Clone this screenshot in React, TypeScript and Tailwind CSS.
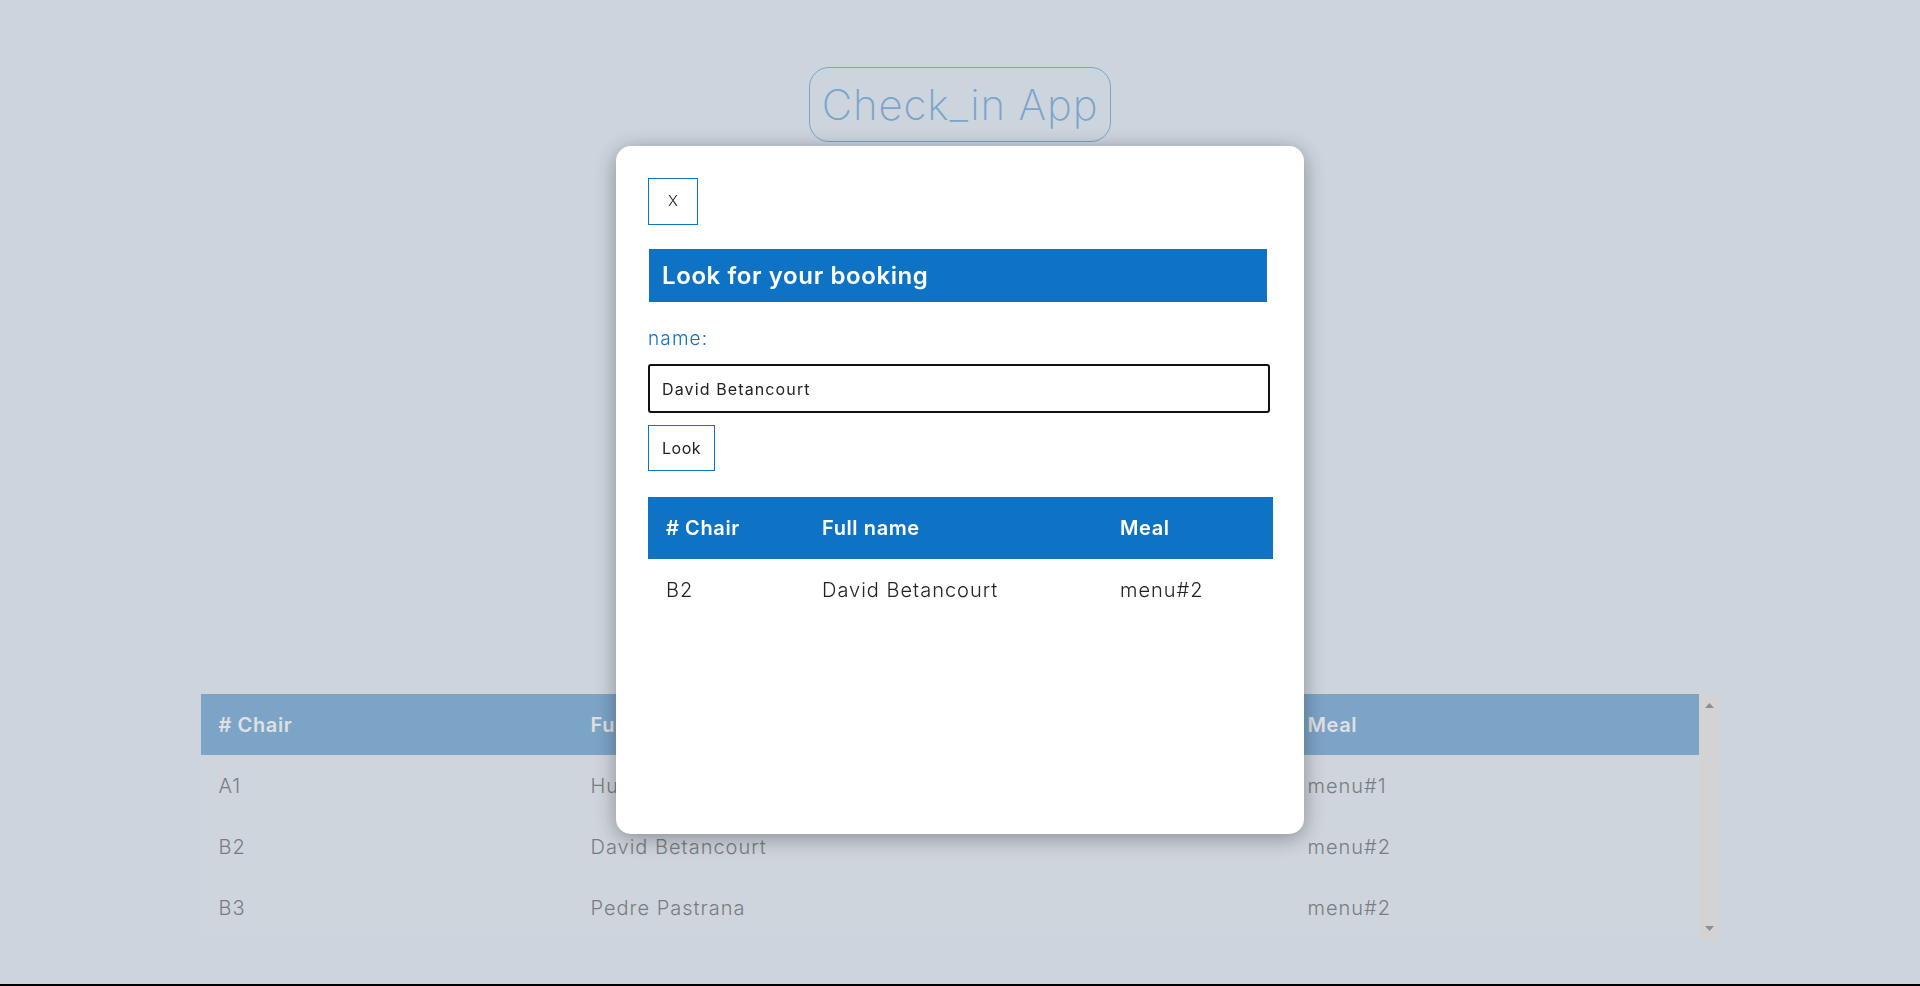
import { useState } from "react";

type Booking = {
  chair: string;
  name: string;
  meal: string;
};

const bookings: Booking[] = [
  { chair: "A1", name: "Hugo Martinez", meal: "menu#1" },
  { chair: "B2", name: "David Betancourt", meal: "menu#2" },
  { chair: "B3", name: "Pedre Pastrana", meal: "menu#2" },
];

const font = { fontFamily: "Inter, 'Noto Sans', sans-serif" };

// fake scrollbar track, content fits so there is no thumb
const ScrollTrack = () => (
  <div className="flex w-[21px] flex-col items-center justify-between bg-[#f1f1f1] py-[9px]">
    <svg width="9" height="5" viewBox="0 0 9 5">
      <polygon points="4.5,0 9,5 0,5" fill="#a3a3a3" />
    </svg>
    <svg width="9" height="5" viewBox="0 0 9 5">
      <polygon points="0,0 9,0 4.5,5" fill="#a3a3a3" />
    </svg>
  </div>
);

const SearchModal = () => {
  const [query, setQuery] = useState("David Betancourt");
  const results = bookings.filter((b) => b.name === query);

  return (
    <div className="fixed inset-0 flex justify-center bg-black/[0.12] pt-[146px]">
      <div className="flex h-[688px] w-[688px] flex-col rounded-[15px] bg-white px-8 pt-8 shadow-[0_4px_22px_rgba(0,0,0,0.35)]">
        <button className="flex h-[47px] w-[50px] items-center justify-center border border-[#0e72c5] text-[15px] font-light text-[#222]">
          X
        </button>

        <h2 className="mt-6 ml-px flex h-[53px] w-[618px] items-center bg-[#0e72c5] pl-[13px] text-[24px] font-semibold tracking-[0.025em] text-white">
          Look for your booking
        </h2>

        <label className="mt-6 text-[19px] leading-[26px] font-light tracking-[0.06em] text-[#0e72c5]">
          name:
        </label>

        <input
          autoFocus
          value={query}
          onChange={(e) => setQuery(e.target.value)}
          className="mt-3 h-[49px] w-[622px] rounded-[3px] border-2 border-[#111] px-3 text-[16px] tracking-[0.07em] text-[#222] caret-black outline-none"
          style={font}
        />

        <button className="mt-3 h-[46px] w-[67px] border border-[#0e72c5] text-[16px] tracking-[0.03em] text-[#222]">
          Look
        </button>

        <table className="mt-[26px] w-[625px] table-fixed border-collapse text-left">
          <thead>
            <tr className="h-[62px] bg-[#0e72c5] text-[20px] font-semibold tracking-[0.03em] text-white">
              <th className="w-[156px] pl-[18px] font-semibold"># Chair</th>
              <th className="w-[298px] pl-[18px] font-semibold">Full name</th>
              <th className="pl-[18px] font-semibold">Meal</th>
            </tr>
          </thead>
          <tbody>
            {results.map((b) => (
              <tr
                key={b.chair}
                className="h-[62px] text-[20px] font-light tracking-[0.05em] text-[#222]"
              >
                <td className="pl-[18px]">{b.chair}</td>
                <td className="pl-[18px]">{b.name}</td>
                <td className="pl-[18px]">{b.meal}</td>
              </tr>
            ))}
          </tbody>
        </table>
      </div>
    </div>
  );
};

export default function App() {
  return (
    <div
      className="flex min-h-screen flex-col items-center border-b-2 border-black bg-[#e9f2fd]"
      style={font}
    >
      <h1 className="mt-[67px] flex h-[75px] w-[302px] items-center justify-center rounded-[20px] border border-[#8cbbe4] text-[42px] font-extralight tracking-[0.02em] text-[#8cbbe4]">
        Check_in App
      </h1>

      <div className="mt-[552px] flex h-[246px] w-[1519px]">
        <table className="w-[1498px] table-fixed border-collapse self-start bg-[#ecf3fb] text-left">
          <thead>
            <tr className="h-[61px] bg-[#8ebbe3] text-[20px] font-semibold tracking-[0.03em] text-white">
              <th className="w-[372px] pl-[18px] font-semibold"># Chair</th>
              <th className="w-[717px] pl-[18px] font-semibold">Full name</th>
              <th className="pl-[18px] font-semibold">Meal</th>
            </tr>
          </thead>
          <tbody>
            {bookings.map((b) => (
              <tr
                key={b.chair}
                className="h-[61px] text-[20px] font-light tracking-[0.05em] text-[#8a8f96]"
              >
                <td className="pl-[18px]">{b.chair}</td>
                <td className="pl-[18px]">{b.name}</td>
                <td className="pl-[18px]">{b.meal}</td>
              </tr>
            ))}
          </tbody>
        </table>
        <ScrollTrack />
      </div>

      <SearchModal />
    </div>
  );
}
